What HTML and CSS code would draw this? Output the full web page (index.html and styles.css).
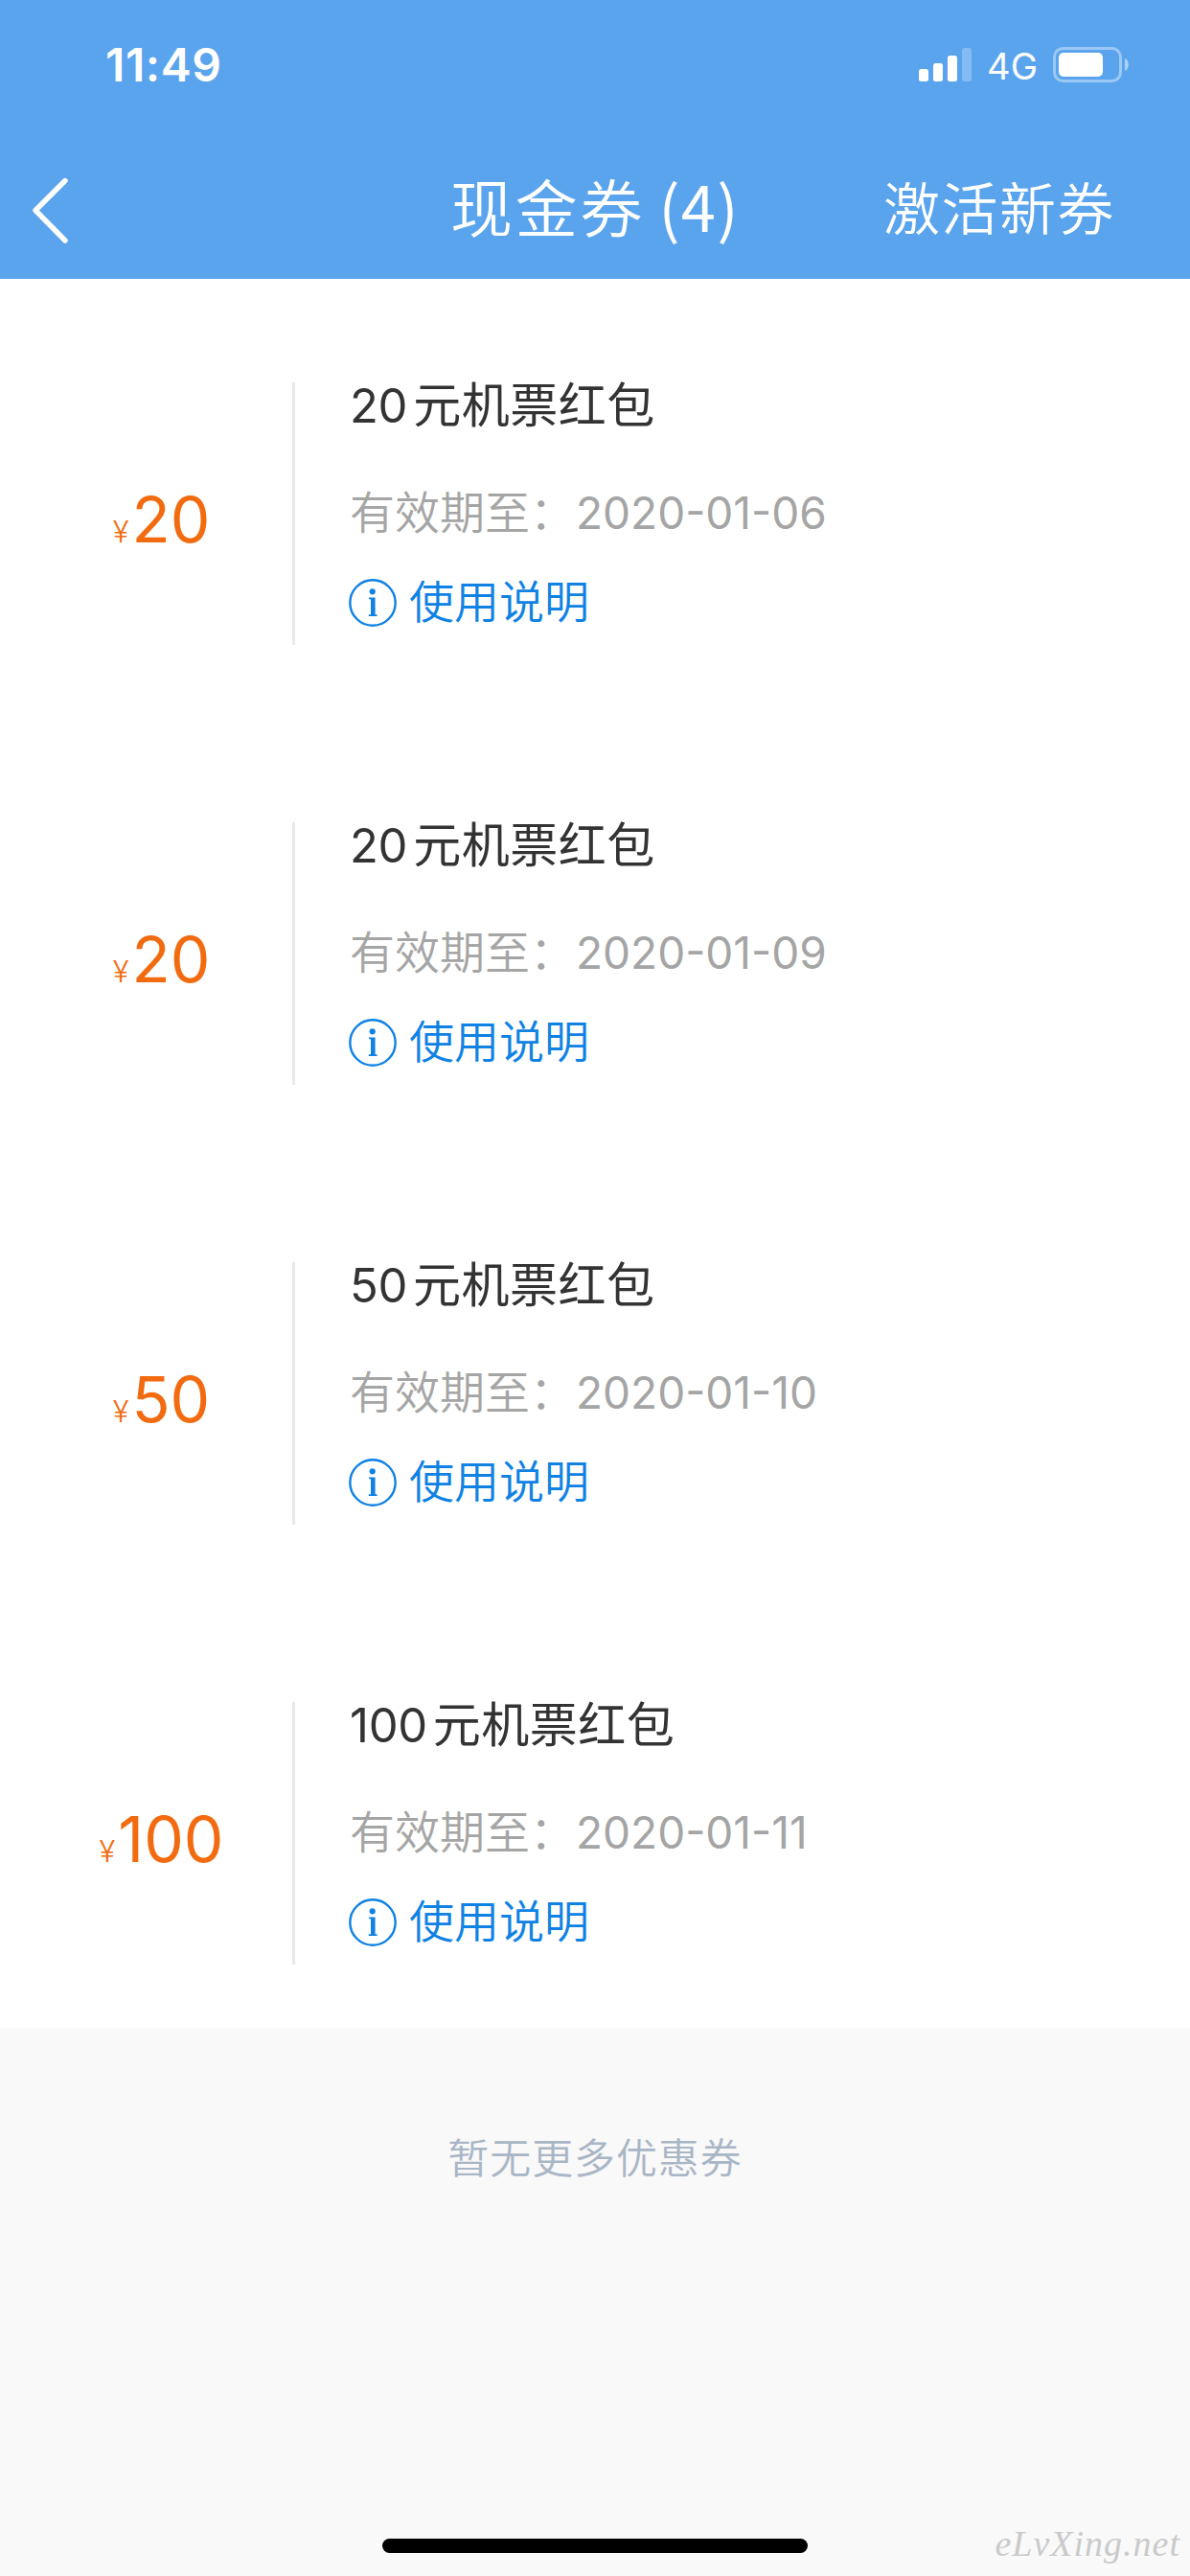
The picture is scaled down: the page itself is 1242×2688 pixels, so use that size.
FILE: index.html
```html
<!DOCTYPE html>
<html lang="zh-CN">
<head>
    <meta charset="UTF-8">
    <meta name="viewport" content="width=device-width, initial-scale=1.0">
    <title>现金券</title>
    <link rel="stylesheet" href="styles.css">
</head>
<body>
    <svg class="symbols" width="0" height="0">
        <symbol id="icon-info" viewBox="0 0 50 50">
            <circle cx="25" cy="25" r="23.7" fill="none" stroke="currentColor" stroke-width="2.4"/>
            <circle cx="24.7" cy="13.3" r="3.1" fill="currentColor"/>
            <path d="M21 19.6h6.6v17.6h2v1.8h-8.8v-1.8h2.2V21.2h-2z" fill="currentColor"/>
        </symbol>
    </svg>

    <header class="header">
        <div class="status-bar">
            <span class="time">11:49</span>
            <div class="status-icons">
                <svg class="signal" width="56" height="36" viewBox="0 0 56 36" fill="#fff">
                    <rect x="0" y="22" width="10" height="13" rx="2.5"/>
                    <rect x="15" y="16" width="10" height="19" rx="2.5"/>
                    <rect x="30" y="8" width="10" height="27" rx="2.5"/>
                    <rect x="45" y="0" width="10" height="35" rx="2.5" opacity="0.25"/>
                </svg>
                <span class="network">4G</span>
                <svg class="battery" width="80" height="38" viewBox="0 0 80 38">
                    <rect x="1.5" y="1.5" width="69" height="34" rx="9" fill="none" stroke="#fff" stroke-width="3" opacity="0.4"/>
                    <rect x="6" y="6" width="46" height="25" rx="5" fill="#fff"/>
                    <path d="M75 12c5 2 5 11 0 13z" fill="#fff" opacity="0.5"/>
                </svg>
            </div>
        </div>
        <nav class="nav">
            <a class="back" href="#">
                <svg width="40" height="70" viewBox="0 0 40 70">
                    <path d="M37 3.5L6 34.5L37 66" fill="none" stroke="#fff" stroke-width="5.4" stroke-linecap="round" stroke-linejoin="round"/>
                </svg>
            </a>
            <h1 class="title">现金券 <span class="count">(4)</span></h1>
            <a class="activate" href="#">激活新券</a>
        </nav>
    </header>

    <main class="coupons">
        <div class="coupon">
            <div class="price"><span class="yen">¥</span>20</div>
            <div class="info">
                <h2 class="name"><span class="num">20</span>元机票红包</h2>
                <p class="expiry">有效期至：<span class="date">2020-01-06</span></p>
                <a class="usage" href="#"><svg class="icon"><use href="#icon-info"/></svg>使用说明</a>
            </div>
        </div>
        <div class="coupon">
            <div class="price"><span class="yen">¥</span>20</div>
            <div class="info">
                <h2 class="name"><span class="num">20</span>元机票红包</h2>
                <p class="expiry">有效期至：<span class="date">2020-01-09</span></p>
                <a class="usage" href="#"><svg class="icon"><use href="#icon-info"/></svg>使用说明</a>
            </div>
        </div>
        <div class="coupon">
            <div class="price"><span class="yen">¥</span>50</div>
            <div class="info">
                <h2 class="name"><span class="num">50</span>元机票红包</h2>
                <p class="expiry">有效期至：<span class="date">2020-01-10</span></p>
                <a class="usage" href="#"><svg class="icon"><use href="#icon-info"/></svg>使用说明</a>
            </div>
        </div>
        <div class="coupon">
            <div class="price"><span class="yen">¥</span>100</div>
            <div class="info">
                <h2 class="name"><span class="num">100</span>元机票红包</h2>
                <p class="expiry">有效期至：<span class="date">2020-01-11</span></p>
                <a class="usage" href="#"><svg class="icon"><use href="#icon-info"/></svg>使用说明</a>
            </div>
        </div>
    </main>

    <p class="no-more">暂无更多优惠券</p>

    <div class="home-indicator"></div>
    <div class="watermark">eLvXing.net</div>
</body>
</html>
```

FILE: styles.css
```css
* {
    box-sizing: border-box;
    margin: 0;
    padding: 0;
}

body {
    position: relative;
    height: 2688px;
    overflow: hidden;
    background: #f9f9f9;
    font-family: "Noto Sans CJK SC", sans-serif;
    font-weight: 350;
}

a {
    color: inherit;
    text-decoration: none;
}

.symbols {
    display: block;
    height: 0;
}

/* header */
.header {
    height: 291px;
    background: #5aa4ee;
    color: #fff;
}

.status-bar {
    display: flex;
    justify-content: space-between;
    height: 148px;
    padding: 39px 63px 0 110px;
    font-family: Inter, sans-serif;
}

.time {
    font-size: 48px;
    line-height: 57px;
    font-weight: 600;
    letter-spacing: 0.6px;
}

.status-icons {
    display: flex;
    align-items: flex-start;
}

.signal {
    margin-top: 11px;
}

.network {
    margin: 5px 16px 0 15px;
    font-size: 38px;
    line-height: 50px;
    font-weight: 400;
}

.battery {
    margin-top: 10px;
}

.nav {
    display: grid;
    grid-template-columns: 340px 1fr 340px;
    align-items: center;
    height: 143px;
}

.back {
    padding-left: 31px;
}

.back svg {
    display: block;
}

.title {
    padding-bottom: 12px;
    text-align: center;
    font-size: 65px;
    line-height: 90px;
    font-weight: 350;
    letter-spacing: 2.7px;
    white-space: nowrap;
}

.count {
    margin-left: -3px;
    font-weight: 400;
    letter-spacing: 1.5px;
}

.activate {
    padding: 0 0 9px 20px;
    font-size: 59px;
    line-height: 90px;
    letter-spacing: 1.5px;
}

/* coupon list */
.coupons {
    display: flex;
    flex-direction: column;
    gap: 185px;
    height: 1825px;
    padding-top: 108px;
    background: #fff;
}

.coupon {
    display: flex;
    height: 274px;
}

.price {
    width: 308px;
    padding: 103px 0 0 32px;
    border-right: 3px solid #e9e9e9;
    color: #f26b10;
    text-align: center;
    font-family: Inter, sans-serif;
    font-size: 66px;
    line-height: 80px;
    font-weight: 400;
}

.yen {
    margin-right: 3px;
    font-size: 31px;
    font-weight: 300;
}

.info {
    padding-left: 57px;
}

.name {
    height: 54px;
    color: #333;
    font-size: 50px;
    line-height: 40px;
    font-weight: 400;
    letter-spacing: 0.5px;
}

.num {
    margin-right: 6px;
    font-family: Inter, sans-serif;
    font-size: 49px;
    font-weight: 400;
    letter-spacing: -0.3px;
}

.expiry {
    margin-top: 52px;
    color: #a5a5a5;
    font-size: 47px;
    line-height: 54px;
}

.date {
    margin-left: 1px;
    font-family: Inter, sans-serif;
    font-size: 46px;
    font-weight: 400;
}

.usage {
    display: flex;
    height: 54px;
    margin-top: 38px;
    color: #0f82e4;
    font-size: 47px;
    line-height: 50px;
}

.icon {
    width: 50px;
    height: 50px;
    margin: 4px 13px 0 -1px;
}

.no-more {
    padding-top: 103px;
    color: #a9b6c6;
    text-align: center;
    font-size: 43px;
    line-height: 60px;
    letter-spacing: 0.9px;
}

.home-indicator {
    position: absolute;
    left: 399px;
    bottom: 24px;
    width: 444px;
    height: 15px;
    border-radius: 8px;
    background: #000;
}

.watermark {
    position: absolute;
    right: 10px;
    bottom: 12px;
    color: #cacaca;
    font-family: "Liberation Serif", serif;
    font-size: 38px;
    font-style: italic;
    font-weight: 400;
    letter-spacing: 1px;
}
```
